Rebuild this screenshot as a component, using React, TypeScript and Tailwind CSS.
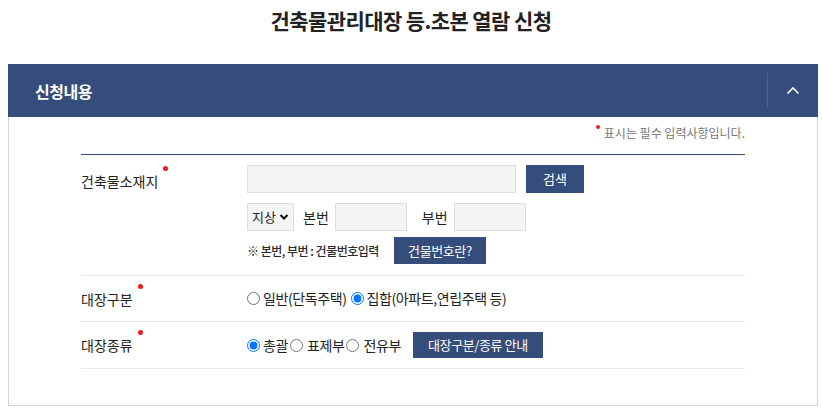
import React from "react";

const font = { fontFamily: '"Noto Sans CJK KR", "Noto Sans", sans-serif' };

function Dot() {
  return <span className="absolute -top-[5px] -right-[10px] w-[5px] h-[5px] rounded-full bg-[#ee1c1c]" />;
}

export default function App() {
  return (
    <div className="w-[822px] h-[418px] bg-white text-[#222]" style={font}>
      <h1 className="pt-[4px] h-[64px] text-center text-[21px] leading-[32px] font-bold text-[#222] tracking-[-0.6px]">
        건축물관리대장 등.초본 열람 신청
      </h1>
      <div className="mx-[8px] w-[810px]">
        <div className="h-[53px] bg-[#344d7a] flex items-center">
          <div className="flex-1 pl-[27px] text-white text-[16px] font-bold tracking-[-0.5px]">신청내용</div>
          <div className="w-px h-[35px] bg-[#4b6390]" />
          <div className="w-[50px] flex items-center justify-center">
            <svg width="14" height="9" viewBox="0 0 14 9">
              <path d="M1.5 7.5 L7 2 L12.5 7.5" fill="none" stroke="white" strokeWidth="1.6" />
            </svg>
          </div>
        </div>
        <div className="border-x border-b border-[#d4d4d4] px-[72px] pb-[36px]">
          <div className="flex justify-end pt-[7px] h-[37px]">
            <span className="relative text-[12px] leading-[18px] text-[#777] pl-[8px]">
              <span className="absolute left-0 top-[1px] w-[4px] h-[4px] rounded-full bg-[#ee1c1c]" />
              표시는 필수 입력사항입니다.
            </span>
          </div>
          <div className="border-t border-[#344d7a]">
            {/* row 1 */}
            <div className="flex border-b border-[#e8e8e8] pt-[10px] pb-[11px]">
              <div className="w-[166px] pt-[6px] text-[14px] leading-[20px]">
                <span className="relative">건축물소재지<Dot /></span>
              </div>
              <div className="flex flex-col">
                <div className="flex items-center gap-[10px]">
                  <div className="w-[269px] h-[28px] bg-[#f4f4f4] border border-[#dedede]" />
                  <button className="w-[58px] h-[28px] bg-[#344d7a] text-white text-[13px]">검색</button>
                </div>
                <div className="flex items-center mt-[10px] text-[14px]">
                  <div className="w-[47px] h-[28px] bg-[#f4f4f4] border border-[#dedede] flex items-center pl-[4px] gap-[3px]">
                    <span className="text-[13px]">지상</span>
                    <svg width="10" height="8" viewBox="0 0 10 8">
                      <path d="M1.5 2 L5 5.5 L8.5 2" fill="none" stroke="#111" strokeWidth="2" />
                    </svg>
                  </div>
                  <span className="ml-[9px]">본번</span>
                  <div className="ml-[6px] w-[72px] h-[28px] bg-[#f4f4f4] border border-[#dedede]" />
                  <span className="ml-[15px]">부번</span>
                  <div className="ml-[6px] w-[72px] h-[28px] bg-[#f4f4f4] border border-[#dedede]" />
                </div>
                <div className="flex items-center mt-[6px]">
                  <span className="text-[12px] text-[#2a2a2a] font-medium tracking-[-0.5px]">※ 본번, 부번 : 건물번호입력</span>
                  <button className="ml-[15px] w-[92px] h-[27px] bg-[#344d7a] text-white text-[13px] tracking-[-0.4px]">건물번호란?</button>
                </div>
              </div>
            </div>
            {/* row 2 */}
            <div className="flex items-center border-b border-[#e8e8e8] h-[46px]">
              <div className="w-[166px] text-[14px] leading-[20px]">
                <span className="relative">대장구분<Dot /></span>
              </div>
              <div className="flex items-center text-[14px] tracking-[-0.4px]">
                <label className="flex items-center gap-[3px]">
                  <input type="radio" name="a" className="m-0 w-[13px] h-[13px]" />일반(단독주택)
                </label>
                <label className="flex items-center gap-[3px] ml-[4px]">
                  <input type="radio" name="a" defaultChecked className="m-0 w-[13px] h-[13px]" />집합(아파트,연립주택 등)
                </label>
              </div>
            </div>
            {/* row 3 */}
            <div className="flex items-center border-b border-[#e8e8e8] h-[47px]">
              <div className="w-[166px] text-[14px] leading-[20px]">
                <span className="relative">대장종류<Dot /></span>
              </div>
              <div className="flex items-center text-[14px] tracking-[-0.4px]">
                <label className="flex items-center gap-[3px]">
                  <input type="radio" name="b" defaultChecked className="m-0 w-[13px] h-[13px]" />총괄
                </label>
                <label className="flex items-center gap-[4px] ml-[2px]">
                  <input type="radio" name="b" className="m-0 w-[13px] h-[13px]" />표제부
                </label>
                <label className="flex items-center gap-[4px] ml-[2px]">
                  <input type="radio" name="b" className="m-0 w-[13px] h-[13px]" />전유부
                </label>
                <button className="ml-[12px] w-[130px] h-[26px] bg-[#344d7a] text-white text-[13px] tracking-[-0.4px]">대장구분/종류 안내</button>
              </div>
            </div>
          </div>
        </div>
      </div>
    </div>
  );
}
